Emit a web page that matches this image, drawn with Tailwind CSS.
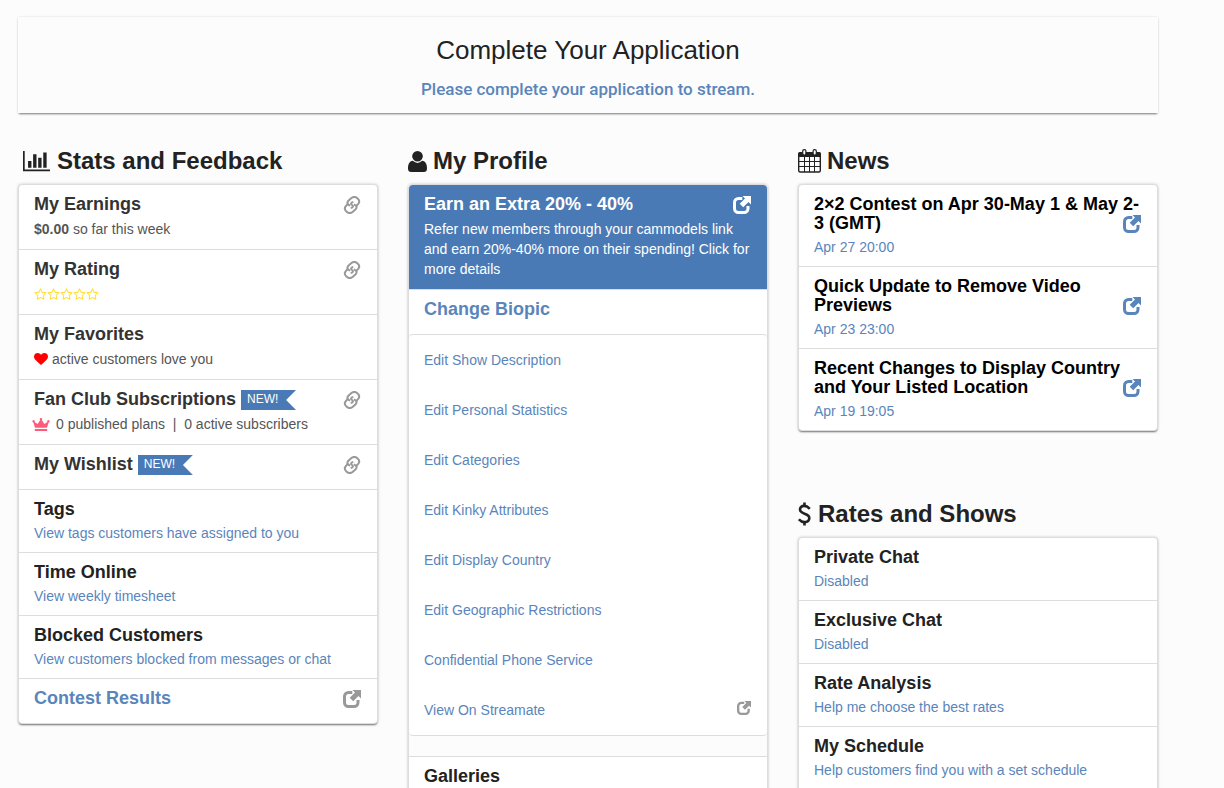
<!DOCTYPE html>
<html lang="en">
<head>
<meta charset="utf-8">
<meta name="viewport" content="width=device-width, initial-scale=1">
<title>Dashboard</title>
<script src="https://cdn.jsdelivr.net/npm/@tailwindcss/browser@4"></script>
</head>
<body class="bg-[#fcfcfc] font-['Liberation_Sans',Arial,sans-serif] text-sm leading-5 text-[#555]">

<svg class="hidden" aria-hidden="true">
  <symbol id="chain" viewBox="-9 -9 18 18"><g fill="none" stroke="currentColor" stroke-width="2"><path d="M1.300 -3C-1.300 -2.600 -1.500 -.900 0 0S1.300 2.600 -1.300 3"/><path id="hook" d="M-1.800 .700C-4.800 -.600 -5.300 -2.600 -3.600 -4.300L-.600 -7C1.200 -8.400 3.600 -8.300 5.600 -6.500 7.600 -4.700 7.600 -2.800 6.200 -1.100L4 1.200"/><use href="#hook" transform="rotate(180)"/></g></symbol>
  <symbol id="external" viewBox="0 0 18 18"><path fill="none" stroke="currentColor" stroke-width="3" d="M9.300 2.500H5.500a4 4 0 0 0-4 4V12.500a4 4 0 0 0 4 4h5.500a4 4 0 0 0 4-4V10"/><path fill="currentColor" d="M9.500 0H18v8.500l-2.500-2.500-5.300 5.300-3.500-3.500 5.300-5.300z"/></symbol>
  <symbol id="star" viewBox="0 0 1792 1792"><path fill="currentColor" d="M1201 1004l306-297-422-62-189-382-189 382-422 62 306 297-73 421 378-199 377 199zm527-357q0 22-26 48l-363 354 86 500q1 7 1 20 0 50-41 50-19 0-40-12l-449-236-449 236q-22 12-40 12-21 0-31.500-14.500t-10.500-35.500q0-6 2-20l86-500-364-354q-25-27-25-48 0-37 56-46l502-73 225-455q19-41 49-41t49 41l225 455 502 73q56 9 56 46z"/></symbol>
</svg>

<main class="ml-[18px] mr-4 max-w-[1140px] pt-[17px]">
  <section class="flex flex-col items-center pt-[18px] pb-[14px] text-center shadow-[0_2px_2px_-1px_rgba(0,0,0,0.5),0_0_2px_rgba(0,0,0,0.14)]">
    <h1 class="text-[26px] leading-[30px] text-[#222]">Complete Your Application</h1>
    <a href="#" class="mt-[14px] font-['Roboto',sans-serif] text-[17px] leading-5 font-medium text-[#5a85bb]">Please complete your application to stream.</a>
  </section>

  <div class="mt-[35px] grid grid-cols-3 gap-[30px]">

    <section>
      <h2 class="mb-2.5 flex h-[26px] items-center gap-[7px] pl-[5px] text-2xl font-bold text-[#222]">
        <svg class="h-[24px] w-[27px]" viewBox="0 0 2048 1792" fill="currentColor"><path d="M640 896v512h-256v-512h256zm384-512v1024h-256v-1024h256zm1024 1152v128h-2048v-1536h128v1408h1920zm-640-896v768h-256v-768h256zm384-384v1152h-256v-1152h256z"/></svg>
        Stats and Feedback</h2>
      <ul class="divide-y divide-[#ddd] rounded border border-[#ddd] bg-white shadow-[0_2px_2px_-1px_rgba(0,0,0,0.5),0_0_3px_rgba(0,0,0,0.2)]">
        <li class="flex items-start justify-between pr-4 pl-[15px] pt-[9px] pb-2.5">
          <div><h3 class="text-lg leading-5 font-bold text-[#333]">My Earnings</h3><p class="mt-[5px]"><b>$0.00</b> so far this week</p></div>
          <a href="#" aria-label="My Earnings" class="mt-0.5 text-[#999]"><svg class="size-[18px]"><use href="#chain"/></svg></a>
        </li>
        <li class="flex items-start justify-between pr-4 pl-[15px] pt-[9px] pb-2.5">
          <div><h3 class="text-lg leading-5 font-bold text-[#333]">My Rating</h3>
            <p class="mt-[5px] flex h-5 items-center text-[#fd3]"><svg class="size-[13px]"><use href="#star"/></svg><svg class="size-[13px]"><use href="#star"/></svg><svg class="size-[13px]"><use href="#star"/></svg><svg class="size-[13px]"><use href="#star"/></svg><svg class="size-[13px]"><use href="#star"/></svg></p></div>
          <a href="#" aria-label="My Rating" class="mt-0.5 text-[#999]"><svg class="size-[18px]"><use href="#chain"/></svg></a>
        </li>
        <li class="px-[15px] pt-[9px] pb-2.5">
          <h3 class="text-lg leading-5 font-bold text-[#333]">My Favorites</h3>
          <p class="mt-[5px] flex items-center gap-1"><svg class="size-[14px]" viewBox="0 0 1792 1792" fill="#f00"><path d="M896 1664q-26 0-44-18l-624-602q-10-8-27.500-26t-55.500-65.500-68-97.500-53.500-121-23.500-138q0-220 127-344t351-124q62 0 126.500 21.500t120 58 95.500 68.500 76 68q36-36 76-68t95.500-68.500 120-58 126.500-21.500q224 0 351 124t127 344q0 221-229 450l-623 600q-18 18-44 18z"/></svg>active customers love you</p>
        </li>
        <li class="flex items-start justify-between pr-4 pl-[15px] pt-[9px] pb-2.5">
          <div><h3 class="flex h-5 items-start gap-[5px] text-lg leading-5 font-bold text-[#333]">Fan Club Subscriptions
              <span class="mt-px h-5 w-[55px] bg-[#4a7ab5] pl-1.5 text-xs leading-[18px] font-normal text-white [clip-path:polygon(0_0,100%_0,82%_50%,100%_100%,0_100%)]">NEW!</span></h3>
            <p class="mt-[5px] flex items-center gap-1.5 whitespace-pre"><svg class="-ml-0.5 h-[13px] w-[18px]" viewBox="0 0 18 13" fill="#ff5c7c"><path d="M3 9.700 1.400 4.500A1.200 1.200 0 1 1 2.600 4L5.600 6 8.200 2A1.200 1.200 0 1 1 9.800 2L12.400 6 15.400 4A1.200 1.200 0 1 1 16.600 4.500L15 9.700zM2.800 11h12.400v2H2.800z"/></svg>0 published plans  |  0 active subscribers</p></div>
          <a href="#" aria-label="Fan Club Subscriptions" class="mt-0.5 text-[#999]"><svg class="size-[18px]"><use href="#chain"/></svg></a>
        </li>
        <li class="flex items-start justify-between pr-4 pl-[15px] pt-[9px] pb-[15px]">
          <h3 class="flex h-5 items-start gap-[5px] text-lg leading-5 font-bold text-[#333]">My Wishlist
            <span class="mt-px h-5 w-[55px] bg-[#4a7ab5] pl-1.5 text-xs leading-[18px] font-normal text-white [clip-path:polygon(0_0,100%_0,82%_50%,100%_100%,0_100%)]">NEW!</span></h3>
          <a href="#" aria-label="My Wishlist" class="mt-0.5 -mb-1 text-[#999]"><svg class="size-[18px]"><use href="#chain"/></svg></a>
        </li>
        <li class="px-[15px] py-[9px]"><h3 class="text-lg leading-5 font-bold text-[#222]">Tags</h3><a href="#" class="mt-1 block text-[#5a85bb]">View tags customers have assigned to you</a></li>
        <li class="px-[15px] py-[9px]"><h3 class="text-lg leading-5 font-bold text-[#222]">Time Online</h3><a href="#" class="mt-1 block text-[#5a85bb]">View weekly timesheet</a></li>
        <li class="px-[15px] py-[9px]"><h3 class="text-lg leading-5 font-bold text-[#222]">Blocked Customers</h3><a href="#" class="mt-1 block text-[#5a85bb]">View customers blocked from messages or chat</a></li>
        <li><a href="#" class="flex justify-between pr-4 pl-[15px] pt-[9px] pb-[15px] text-lg leading-5 font-bold text-[#5a85bb]">Contest Results<svg class="mt-0.5 size-[18px] text-[#999]"><use href="#external"/></svg></a></li>
      </ul>
    </section>

    <section>
      <h2 class="mb-2.5 flex h-[26px] items-center gap-1.5 text-2xl font-bold text-[#222]">
        <svg class="h-[21px] w-[19px]" viewBox="0 0 19 21" fill="currentColor"><ellipse cx="9.500" cy="5.300" rx="5.300" ry="5.300"/><path d="M4.800 9.800Q9.500 14 14.200 9.800C17.600 10.300 19 13.200 19 17.500Q19 21 15.800 21H3.200Q0 21 0 17.500C0 13.200 1.400 10.300 4.800 9.800z"/></svg>
        My Profile</h2>
      <div class="rounded border border-[#ddd] shadow-[0_2px_2px_-1px_rgba(0,0,0,0.5),0_0_3px_rgba(0,0,0,0.2)]">
        <a href="#" class="block rounded-t bg-[#4a7ab5] pr-4 pl-[15px] pt-[9px] pb-2.5 text-white">
          <span class="flex justify-between text-lg leading-5 font-bold">Earn an Extra 20% - 40%<svg class="mt-0.5 size-[18px]"><use href="#external"/></svg></span>
          <span class="mt-[5px] block">Refer new members through your cammodels link and earn 20%-40% more on their spending! Click for more details</span>
        </a>
        <a href="#" class="block border-t border-[#ddd] bg-white px-[15px] pt-[9px] pb-[15px] text-lg leading-5 font-bold text-[#5a85bb]">Change Biopic</a>
        <ul class="rounded border-y border-[#ddd] bg-white text-[#5a85bb]">
          <li><a href="#" class="block px-[15px] py-[15px]">Edit Show Description</a></li>
          <li><a href="#" class="block px-[15px] py-[15px]">Edit Personal Statistics</a></li>
          <li><a href="#" class="block px-[15px] py-[15px]">Edit Categories</a></li>
          <li><a href="#" class="block px-[15px] py-[15px]">Edit Kinky Attributes</a></li>
          <li><a href="#" class="block px-[15px] py-[15px]">Edit Display Country</a></li>
          <li><a href="#" class="block px-[15px] py-[15px]">Edit Geographic Restrictions</a></li>
          <li><a href="#" class="block px-[15px] py-[15px]">Confidential Phone Service</a></li>
          <li><a href="#" class="flex justify-between pr-4 pl-[15px] py-[15px]">View On Streamate<svg class="mt-px size-[14px] text-[#999]"><use href="#external"/></svg></a></li>
        </ul>
        <h3 class="mt-5 border-t border-[#ddd] bg-white px-[15px] pt-[9px] pb-[15px] text-lg leading-5 font-bold text-[#222]">Galleries</h3>
      </div>
    </section>

    <div class="flex flex-col">
      <h2 class="mb-2.5 flex h-[26px] items-center gap-1.5 text-2xl font-bold text-[#222]">
        <svg class="h-6 w-[23px]" viewBox="0 0 23 24" fill="none" stroke="currentColor"><path fill="currentColor" stroke="none" d="M0 8V4.500Q0 3 1.500 3h20Q23 3 23 4.500V8z"/><path stroke-width="1.400" d="M.700 6v15.500q0 1.500 1.500 1.500h18.600q1.500 0 1.500-1.500V6"/><path d="M6.500 8v15M11.500 8v15M16.500 8v15M1 12.500h21M1 17.500h21"/><rect x="4.700" y=".600" width="3.200" height="5.400" rx="1.500" fill="#fcfcfc" stroke-width="1.200"/><rect x="15.100" y=".600" width="3.200" height="5.400" rx="1.500" fill="#fcfcfc" stroke-width="1.200"/></svg>
        News</h2>
      <ul class="divide-y divide-[#ddd] rounded border border-[#ddd] bg-white shadow-[0_2px_2px_-1px_rgba(0,0,0,0.5),0_0_3px_rgba(0,0,0,0.2)]">
        <li><a href="#" class="relative block px-[15px] pt-2.5 pb-[9px]"><span class="block text-lg leading-[19px] font-bold text-black">2×2 Contest on Apr 30-May 1 &amp; May 2-3 (GMT)</span><span class="mt-1 block text-[#5a85bb]">Apr 27 20:00</span><svg class="absolute top-[30px] right-4 size-[18px] text-[#5a85bb]"><use href="#external"/></svg></a></li>
        <li><a href="#" class="relative block px-[15px] pt-2.5 pb-[9px]"><span class="block text-lg leading-[19px] font-bold text-black">Quick Update to Remove Video Previews</span><span class="mt-1 block text-[#5a85bb]">Apr 23 23:00</span><svg class="absolute top-[30px] right-4 size-[18px] text-[#5a85bb]"><use href="#external"/></svg></a></li>
        <li><a href="#" class="relative block px-[15px] pt-2.5 pb-[9px]"><span class="block text-lg leading-[19px] font-bold text-black">Recent Changes to Display Country and Your Listed Location</span><span class="mt-1 block text-[#5a85bb]">Apr 19 19:05</span><svg class="absolute top-[30px] right-4 size-[18px] text-[#5a85bb]"><use href="#external"/></svg></a></li>
      </ul>

      <h2 class="mt-[70px] mb-2.5 flex h-[26px] items-center gap-[7px] text-2xl font-bold text-[#222]">
        <svg class="h-6 w-[13px]" viewBox="0 0 13 24" fill="none" stroke="currentColor"><path stroke-width="2.600" d="M11.800 6.800C9.500 4.300 7.500 3.900 6 3.900 3.500 3.900 2 5.500 2 7.600 2 12.800 11.300 10.600 11.300 16 11.300 18.500 9.500 20.100 6.500 20.100 4.500 20.100 2.500 19.200 .900 17.300"/><path stroke-width="2.600" d="M6.500 0.500v3.500M6.500 20v3.500"/></svg>
        Rates and Shows</h2>
      <ul class="grow divide-y divide-[#ddd] rounded border border-[#ddd] bg-white shadow-[0_2px_2px_-1px_rgba(0,0,0,0.5),0_0_3px_rgba(0,0,0,0.2)]">
        <li class="px-[15px] py-[9px]"><h3 class="text-lg leading-5 font-bold text-[#222]">Private Chat</h3><a href="#" class="mt-1 block text-[#5a85bb]">Disabled</a></li>
        <li class="px-[15px] py-[9px]"><h3 class="text-lg leading-5 font-bold text-[#222]">Exclusive Chat</h3><a href="#" class="mt-1 block text-[#5a85bb]">Disabled</a></li>
        <li class="px-[15px] py-[9px]"><h3 class="text-lg leading-5 font-bold text-[#222]">Rate Analysis</h3><a href="#" class="mt-1 block text-[#5a85bb]">Help me choose the best rates</a></li>
        <li class="px-[15px] py-[9px]"><h3 class="text-lg leading-5 font-bold text-[#222]">My Schedule</h3><a href="#" class="mt-1 block text-[#5a85bb]">Help customers find you with a set schedule</a></li>
      </ul>
    </div>
  </div>
</main>
</body>
</html>
